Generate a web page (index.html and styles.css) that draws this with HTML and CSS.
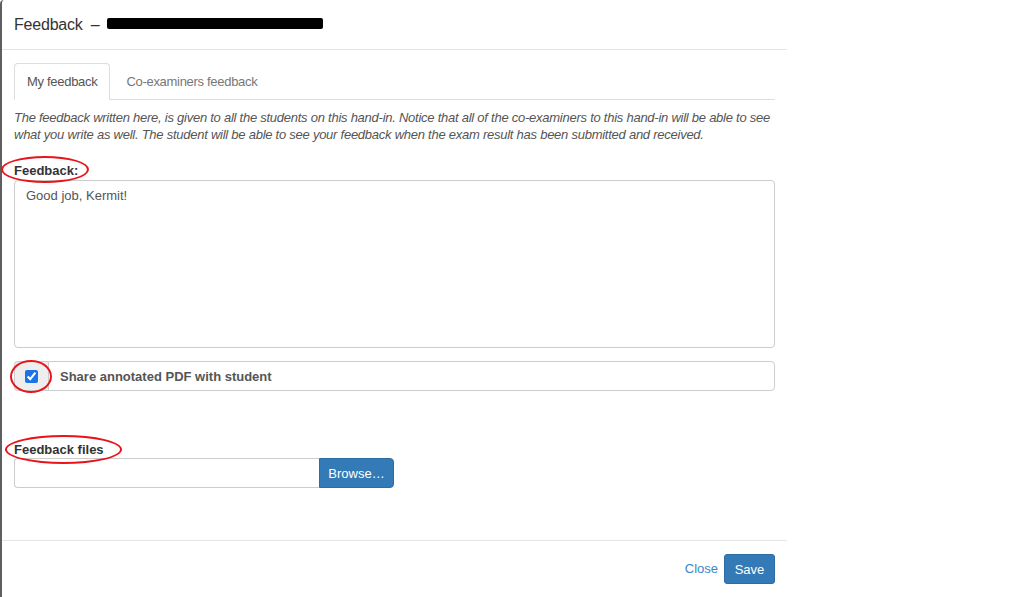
FILE: index.html
```html
<!DOCTYPE html>
<html lang="en">
<head>
<meta charset="utf-8">
<title>Feedback</title>
<link rel="stylesheet" href="styles.css">
</head>
<body>
<div class="modal">
  <div class="modal-header">
    <h4 class="modal-title">Feedback <span class="dash">–</span> <span class="redacted"></span></h4>
  </div>
  <div class="modal-body">
    <ul class="nav-tabs">
      <li class="tab active">My feedback</li>
      <li class="tab">Co-examiners feedback</li>
    </ul>
    <p class="help">The feedback written here, is given to all the students on this hand-in. Notice that all of the co-examiners to this hand-in will be able to see what you write as well. The student will be able to see your feedback when the exam result has been submitted and received.</p>
    <div class="field field-feedback">
      <label class="label annotated">Feedback:<span class="ring ring-feedback"></span></label>
      <div class="textarea">Good job, Kermit!</div>
    </div>
    <div class="input-group check-group">
      <span class="addon annotated"><input type="checkbox" checked><span class="ring ring-check"></span></span>
      <span class="check-label">Share annotated PDF with student</span>
    </div>
    <div class="field field-files">
      <label class="label annotated">Feedback files<span class="ring ring-files"></span></label>
      <div class="input-group file-group">
        <span class="file-input"></span>
        <span class="btn btn-primary browse">Browse…</span>
      </div>
    </div>
  </div>
  <div class="modal-footer">
    <span class="link-close">Close</span>
    <span class="btn btn-primary save">Save</span>
  </div>
</div>
</body>
</html>
```
FILE: styles.css
```css
* { box-sizing: border-box; }
html, body { margin: 0; padding: 0; background: #fff; }
body {
  font-family: "Liberation Sans", Arial, sans-serif;
  font-size: 13px;
  color: #333;
}
.modal {
  width: 787px;
  height: 597px;
  border-left: 2px solid #5f5f5f;
  border-top-left-radius: 4px;
  background: #fff;
  display: flex;
  flex-direction: column;
}
.modal-header {
  height: 50px;
  padding: 0 12px;
  border-bottom: 1px solid #e5e5e5;
  display: flex;
  align-items: center;
}
.modal-title {
  margin: 0;
  font-size: 16px;
  font-weight: normal;
  color: #333;
  display: flex;
  align-items: center;
  line-height: 20px;
  letter-spacing: -0.2px;
}
.dash { margin: 0 8px 0 8px; }
.redacted {
  display: inline-block;
  width: 216px;
  height: 11px;
  background: #000;
  border-radius: 2px;
  position: relative;
  top: -1px;
}
.modal-body {
  flex: 1;
  padding: 13px 12px 0 12px;
}
.nav-tabs {
  list-style: none;
  margin: 0;
  padding: 0;
  display: flex;
  border-bottom: 1px solid #ddd;
  height: 37px;
}
.tab {
  padding: 0 12px;
  line-height: 35px;
  height: 37px;
  color: #777;
  border: 1px solid transparent;
  border-radius: 4px 4px 0 0;
  margin-right: 3px;
  letter-spacing: -0.3px;
}
.tab.active {
  color: #555;
  background: #fff;
  border-color: #ddd #ddd transparent #ddd;
}
.help {
  margin: 9px 0 0;
  font-style: italic;
  color: #555;
  line-height: 17px;
  letter-spacing: -0.25px;
}
.field-feedback { margin-top: 19px; }
.label {
  display: block;
  font-weight: bold;
  color: #333;
  line-height: 17px;
  margin-bottom: 1px;
  position: relative;
  width: max-content;
}
.textarea {
  height: 168px;
  border: 1px solid #ccc;
  border-radius: 4px;
  padding: 6px 11px;
  color: #555;
  line-height: 17px;
}
.input-group { display: flex; }
.check-group {
  margin-top: 13px;
  height: 30px;
}
.addon {
  width: 34px;
  background: #eee;
  border: 1px solid #ccc;
  border-right: 0;
  border-radius: 4px 0 0 4px;
  display: flex;
  align-items: center;
  justify-content: center;
  position: relative;
}
.addon input {
  margin: 0;
  width: 13px;
  height: 13px;
  accent-color: #1a73e8;
}
.check-label {
  flex: 1;
  border: 1px solid #ccc;
  border-radius: 0 4px 4px 0;
  padding-left: 11px;
  font-weight: bold;
  color: #555;
  display: flex;
  align-items: center;
}
.field-files { margin-top: 50px; }
.field-files .label { margin-bottom: 0; }
.file-group { height: 30px; width: 380px; }
.file-input {
  width: 305px;
  border: 1px solid #ccc;
  border-right: 0;
  border-radius: 4px 0 0 4px;
}
.btn {
  display: inline-flex;
  align-items: center;
  justify-content: center;
  color: #fff;
  background: #337ab7;
  border: 1px solid #2e6da4;
}
.browse {
  width: 75px;
  border-radius: 0 4px 4px 0;
}
.modal-footer {
  height: 57px;
  border-top: 1px solid #e5e5e5;
  padding: 13px 12px 0 0;
  display: flex;
  justify-content: flex-end;
  align-items: flex-start;
}
.link-close {
  color: #3d85c6;
  line-height: 29px;
  margin-right: 6px;
}
.save {
  width: 51px;
  height: 30px;
  border-radius: 3px;
}
.ring {
  position: absolute;
  border: 2px solid #e8141c;
  border-radius: 50%;
  pointer-events: none;
}
.ring-feedback { left: -13px; top: -6px; width: 88px; height: 27px; }
.ring-check { left: -5px; top: -2px; width: 42px; height: 33px; }
.ring-files { left: -9px; top: -6px; width: 117px; height: 29px; }
```
